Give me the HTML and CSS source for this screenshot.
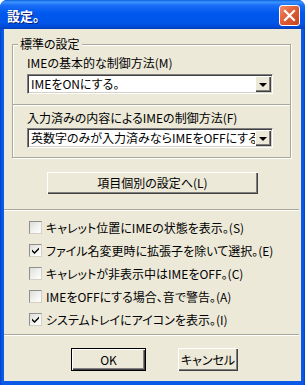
FILE: index.html
```html
<!DOCTYPE html>
<html lang="ja">
<head>
    <meta charset="UTF-8">
    <title>設定。</title>
    <link rel="stylesheet" href="styles.css">
</head>
<body>
    <div class="window">
        <div class="titlebar">
            <span class="title">設定。</span>
            <span class="close-btn">
                <svg width="21" height="21" viewBox="0 0 21 21">
                    <path d="M6 6 L15 15 M15 6 L6 15" stroke="#fff" stroke-width="2.2" stroke-linecap="square"/>
                </svg>
            </span>
        </div>
        <div class="frame">
            <div class="client">
                <fieldset class="group">
                    <legend>標準の設定</legend>
                    <div class="group-section">
                        <div class="field-label">IMEの基本的な制御方法(M)</div>
                        <div class="combo">
                            <span class="combo-text">IMEをONにする。</span>
                            <span class="combo-btn"><span class="arrow"></span></span>
                        </div>
                    </div>
                    <div class="group-sep"></div>
                    <div class="group-section last">
                        <div class="field-label">入力済みの内容によるIMEの制御方法(F)</div>
                        <div class="combo">
                            <span class="combo-text">英数字のみが入力済みならIMEをOFFにする。</span>
                            <span class="combo-btn"><span class="arrow"></span></span>
                        </div>
                    </div>
                </fieldset>

                <div class="btn-row">
                    <button class="btn wide">項目個別の設定へ(L)</button>
                </div>

                <div class="separator"></div>

                <div class="checks">
                    <label class="check"><span class="box"></span>キャレット位置にIMEの状態を表示。(S)</label>
                    <label class="check"><span class="box checked"><svg width="11" height="11" viewBox="0 0 11 11"><path d="M2 4.5 L4.5 7 L9 2.5 L9 4.5 L4.5 9 L2 6.5 Z" fill="#000"/></svg></span>ファイル名変更時に拡張子を除いて選択。(E)</label>
                    <label class="check"><span class="box"></span>キャレットが非表示中はIMEをOFF。(C)</label>
                    <label class="check"><span class="box"></span>IMEをOFFにする場合、音で警告。(A)</label>
                    <label class="check"><span class="box checked"><svg width="11" height="11" viewBox="0 0 11 11"><path d="M2 4.5 L4.5 7 L9 2.5 L9 4.5 L4.5 9 L2 6.5 Z" fill="#000"/></svg></span>システムトレイにアイコンを表示。(I)</label>
                </div>

                <div class="separator"></div>

                <div class="footer">
                    <button class="btn default">OK</button>
                    <button class="btn cancel">キャンセル</button>
                </div>
            </div>
        </div>
    </div>
</body>
</html>
```

FILE: styles.css
```css
body {
    margin: 0;
    font-family: "Noto Sans CJK JP", sans-serif;
    font-size: 12px;
    font-feature-settings: "palt";
    color: #000;
    background: #fff;
}

.window {
    width: 305px;
    height: 385px;
    display: flex;
    flex-direction: column;
    border-radius: 7px 7px 0 0;
    overflow: hidden;
    background: #0053e3;
}

.titlebar {
    height: 29px;
    flex-shrink: 0;
    display: flex;
    align-items: center;
    justify-content: space-between;
    padding: 0 5px 0 7px;
    box-sizing: border-box;
    background: linear-gradient(to bottom, #0a5fdc 0%, #3d95ff 7%, #1a6ff5 18%, #0058ee 45%, #0055e8 80%, #0047cf 95%, #003db8 100%);
}

.title {
    color: #fff;
    font-weight: bold;
    font-size: 13px;
    line-height: 16px;
    padding-top: 2px;
    font-feature-settings: normal;
    text-shadow: 1px 1px #0a1f7a;
}

.close-btn {
    width: 21px;
    height: 21px;
    box-sizing: border-box;
    border: 1px solid #fff;
    border-radius: 3px;
    background: linear-gradient(135deg, #f08d6b 0%, #e2633d 40%, #c8421c 100%);
    margin-top: 2px;
}

.close-btn svg {
    display: block;
    margin: -1px;
}

.frame {
    flex: 1;
    padding: 0 4px 4px;
    background: linear-gradient(to right, #0041c8 0, #0a5ae8 2px, #0a5ae8 calc(100% - 2px), #0041c8 100%);
}

.client {
    height: 352px;
    background: #ece9d8;
    display: flex;
    flex-direction: column;
}

.group {
    margin: 8px 10px 0 8px;
    padding: 0;
    border: 1px solid #aca899;
    box-shadow: inset 1px 1px #fff, 1px 1px #fff;
    min-width: 0;
}

.group legend {
    margin-left: 5px;
    padding: 0 2px;
    line-height: 14px;
    background: #ece9d8;
}

.group-section {
    padding: 5px 17px 10px 14px;
}

.group-section.last {
    padding-bottom: 9px;
}

.group-section.last .combo {
    margin-top: 3px;
}

.field-label {
    line-height: 14px;
    white-space: nowrap;
}

.group-sep {
    height: 1px;
    background: #aca899;
    border-bottom: 1px solid #fff;
}

.combo {
    margin-top: 4px;
    height: 20px;
    box-sizing: border-box;
    display: flex;
    align-items: center;
    background: #fff;
    border: 1px solid;
    border-color: #808080 #fff #fff #808080;
    box-shadow: inset 1px 1px #404040, inset -1px -1px #d4d0c8;
    padding: 1px 1px 1px 3px;
}

.combo-text {
    flex: 1;
    overflow: hidden;
    white-space: nowrap;
    line-height: 16px;
    height: 16px;
}

.combo-btn {
    width: 16px;
    height: 16px;
    flex-shrink: 0;
    box-sizing: border-box;
    display: flex;
    align-items: center;
    justify-content: center;
    background: #ece9d8;
    box-shadow: inset 1px 1px #fff, inset -1px -1px #404040, inset -2px -2px #808080;
}

.arrow {
    width: 0;
    height: 0;
    border-left: 4px solid transparent;
    border-right: 4px solid transparent;
    border-top: 4px solid #000;
    margin-top: 1px;
}

.btn-row {
    display: flex;
    justify-content: center;
    margin-top: 14px;
}

.btn {
    font-family: inherit;
    font-size: 12px;
    font-feature-settings: "palt";
    height: 22px;
    padding: 0;
    border: none;
    background: #ece9d8;
    color: #000;
    box-shadow: inset 1px 1px #fff, inset -1px -1px #404040, inset -2px -2px #808080;
    line-height: 16px;
}

.btn.wide {
    width: 211px;
}

.separator {
    margin: 15px 2px 0 0;
    height: 1px;
    background: #aca899;
    border-bottom: 1px solid #fff;
}

.checks {
    display: flex;
    flex-direction: column;
    gap: 10px;
    margin: 10px 0 0 25px;
}

.check {
    display: flex;
    align-items: center;
    height: 13px;
    line-height: 16px;
    white-space: nowrap;
}

.box {
    width: 13px;
    height: 13px;
    box-sizing: border-box;
    flex-shrink: 0;
    margin-right: 4px;
    background: linear-gradient(135deg, #dcdcd7 0%, #f4f4f2 60%, #fff 100%);
    border: 1px solid;
    border-color: #8f8f8f #d4d0c8 #d4d0c8 #8f8f8f;
    display: flex;
    align-items: center;
    justify-content: center;
}

.checks + .separator {
    margin-top: 8px;
}

.footer {
    display: flex;
    gap: 32px;
    margin: 12px 0 0 67px;
}

.footer .btn {
    width: 75px;
    height: 23px;
}

.footer .btn.cancel {
    width: 60px;
}

.btn.default {
    border: 1px solid #000;
}
```
